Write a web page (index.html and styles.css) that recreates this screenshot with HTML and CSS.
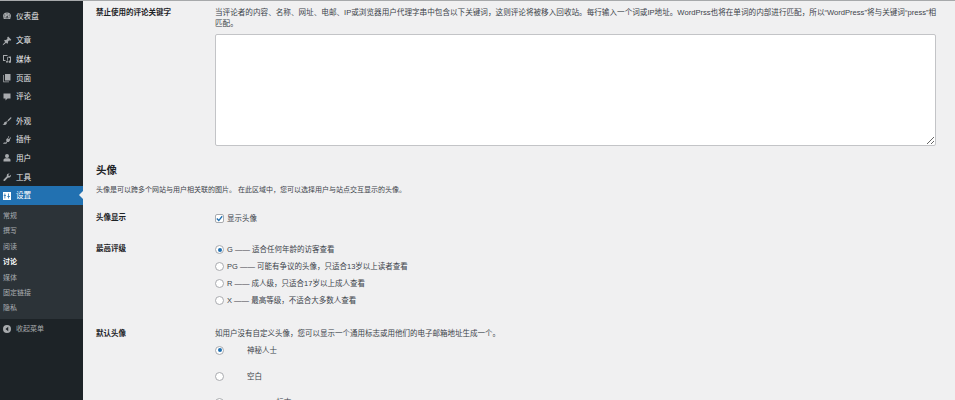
FILE: index.html
```html
<!DOCTYPE html>
<html lang="zh-CN">
<head>
<meta charset="utf-8">
<title>讨论设置</title>
<link rel="stylesheet" href="styles.css">
</head>
<body>
<div class="app">
  <nav class="side">
    <ul class="menu first">
      <li class="item"><svg class="ico" viewBox="0 0 20 20"><path d="M3.8 16C2.7 14.6 2 12.900 2 11a8 8 0 0 1 16 0c0 1.900-.7 3.600-1.800 5zM10 4.500a1 1 0 1 0 0 2 1 1 0 0 0 0-2zM5.500 7a1 1 0 1 0 0 2 1 1 0 0 0 0-2zm9 0a1 1 0 1 0 0 2 1 1 0 0 0 0-2zM4 11a1 1 0 1 0 0 2 1 1 0 0 0 0-2zm12 0a1 1 0 1 0 0 2 1 1 0 0 0 0-2zm-3.500-2.500L9.400 11a1.600 1.600 0 1 0 1.700 1.200zM7 14.500h6V13H7z"/></svg>仪表盘</li>
    </ul>
    <ul class="menu">
      <li class="item"><svg class="ico" viewBox="0 0 20 20"><path d="M10.440 3.020l1.820-1.820 6.360 6.350-1.830 1.820c-1.050-.68-2.480-.57-3.410.36l-.75.75c-.92.93-1.040 2.350-.35 3.410l-1.830 1.820-2.410-2.410-2.800 2.790c-.42.42-3.380 2.710-3.800 2.290s1.860-3.390 2.280-3.810l2.790-2.790L4.100 9.360l1.830-1.820c1.050.69 2.480.57 3.400-.36l.75-.75c.93-.92 1.050-2.350.36-3.410z"/></svg>文章</li>
      <li class="item"><svg class="ico" viewBox="0 0 20 20"><path d="M2 2h9v2H4v8h3v2H2zM13 5h5v10.500a2.500 2.500 0 1 1-2-2.400V8h-3zM8 15.500a2 2 0 1 1 4 0 2 2 0 0 1-4 0zM10 6h1.500v7H10z"/></svg>媒体</li>
      <li class="item"><svg class="ico" viewBox="0 0 20 20"><path d="M6 2h11v13H6zM4 4v13h10v1.500H2.500V4z"/></svg>页面</li>
      <li class="item"><svg class="ico" viewBox="0 0 20 20"><path d="M3 3h14v10h-6l-4 4v-4H3z"/></svg>评论</li>
    </ul>
    <ul class="menu sep">
      <li class="item"><svg class="ico" viewBox="0 0 20 20"><path d="M18 2l-7 6.500 2 2L19 4zM10 9.500L8.500 11 10 12.500l1.500-1zM7.500 11.500C5 11 4.500 13 4 15c-.3 1-1.500 1.500-3 1.500 3 2 6.500 1.500 8-.5 1-1.400 1-2.500.5-3.500z"/></svg>外观</li>
      <li class="item"><svg class="ico" viewBox="0 0 20 20"><path d="M13 2l1.500 1-2.500 4 2 1.300 2.500-3.800L18 5.500l-2.500 4 .8.500-1.500 2.300c-1 1.500-2.800 2-4.300 1.500L9 16.500H3.500V15H8l1.300-2.300c-1-1-1.300-2.700-.5-4l1.500-2.300.9.500zM2 18h7v-1H2z"/></svg>插件</li>
      <li class="item"><svg class="ico" viewBox="0 0 20 20"><path d="M10 2a3.800 3.800 0 1 1 0 8 3.800 3.800 0 0 1 0-8zM3 17v-3c0-2 2-3.500 4-3.500h6c2 0 4 1.500 4 3.500v3z"/></svg>用户</li>
      <li class="item"><svg class="ico" viewBox="0 0 20 20"><path d="M17.500 5.500c.6 1.600.2 3.400-1 4.600-1.200 1.100-2.900 1.500-4.400 1L6 17.500c-.8.800-2 .8-2.700.1-.8-.8-.8-2 0-2.800l6.400-6.300c-.5-1.500-.1-3.200 1-4.400 1.200-1.200 3-1.600 4.600-1l-3 2.900 2 2.400z"/></svg>工具</li>
      <li class="item current"><svg class="ico" viewBox="0 0 20 20"><path d="M2 2h16v16H2zm3 3v3H3.500v1.500H5V15h1.500V9.500H8V8H6.500V5zm7 0v5.500h-1.500V12H12v3h1.500v-3H16v-1.500h-2.500V5z" fill-rule="evenodd"/></svg>设置</li>
    </ul>
    <ul class="sub">
      <li>常规</li>
      <li>撰写</li>
      <li>阅读</li>
      <li class="on">讨论</li>
      <li>媒体</li>
      <li>固定链接</li>
      <li>隐私</li>
    </ul>
    <div class="collapse"><svg class="ico" viewBox="0 0 20 20"><path fill-rule="evenodd" d="M10 2a8 8 0 1 1 0 16 8 8 0 0 1 0-16zm2.500 3.500L7 10l5.500 4.500z"/></svg>收起菜单</div>
  </nav>

  <main class="main">
    <div class="row blacklist">
      <div class="th">禁止使用的评论关键字</div>
      <div class="td">
        <p class="desc lead">当评论者的内容、名称、网址、电邮、IP或浏览器用户代理字串中包含以下关键词，这则评论将被移入回收站。每行输入一个词或IP地址。WordPrss也将在单词的内部进行匹配，所以“WordPress”将与关键词“press”相匹配。</p>
        <textarea class="area"></textarea>
      </div>
    </div>

    <h2 class="title">头像</h2>
    <p class="intro">头像是可以跨多个网站与用户相关联的图片。 在此区域中，您可以选择用户与站点交互显示的头像。</p>

    <div class="row show">
      <div class="th">头像显示</div>
      <div class="td">
        <div class="opt"><span class="check"><svg viewBox="0 0 10 10"><path d="M2 5l2.200 2.300L8 2.500" fill="none" stroke="#2271b1" stroke-width="1.500"/></svg></span>显示头像</div>
      </div>
    </div>

    <div class="row rating">
      <div class="th">最高评级</div>
      <div class="td stack">
        <div class="opt"><span class="radio on"></span>G —— 适合任何年龄的访客查看</div>
        <div class="opt"><span class="radio"></span>PG —— 可能有争议的头像，只适合13岁以上读者查看</div>
        <div class="opt"><span class="radio"></span>R —— 成人级，只适合17岁以上成人查看</div>
        <div class="opt"><span class="radio"></span>X —— 最高等级，不适合大多数人查看</div>
      </div>
    </div>

    <div class="row avatar">
      <div class="th">默认头像</div>
      <div class="td">
        <p class="desc">如用户没有自定义头像，您可以显示一个通用标志或用他们的电子邮箱地址生成一个。</p>
        <div class="pick"><span class="radio on"></span>神秘人士</div>
        <div class="pick"><span class="radio"></span>空白</div>
        <div class="pick"><span class="radio"></span>Gravatar标志</div>
      </div>
    </div>
  </main>
</div>
</body>
</html>
```
FILE: styles.css
```css
* { box-sizing: border-box; }
html, body { margin: 0; height: 400px; overflow: hidden; }
body {
  background: #f0f0f1;
  color: #3c434a;
  font: 7.500px/13px "Liberation Sans", "Noto Sans CJK SC", sans-serif;
}
ul { list-style: none; margin: 0; padding: 0; }
p { margin: 0; }

.app { display: flex; height: 400px; border-top: 1px solid #a7a9ab; }

/* sidebar */
.side { width: 83px; flex: none; background: #1d2327; color: #e6e8ea; padding-top: 6px; font-size: 7.600px; }
.menu { margin-bottom: 6px; }
.menu.first { margin-bottom: 6px; }
.menu.sep { margin: 6px 0 0; }
.item { display: flex; align-items: center; height: 18.600px; padding-left: 2px; gap: 4px; position: relative; }
.ico { width: 10px; height: 10px; flex: none; fill: #a7aaad; }
.item.current { background: #2271b1; color: #fff; margin-top: 0; }
.item.current .ico { fill: #fff; }
.item.current::after {
  content: "";
  position: absolute;
  right: 0;
  top: 5px;
  border: 4.500px solid transparent;
  border-right-color: #f0f0f1;
  border-left-width: 0;
}
.sub { background: #2c3338; padding: 3px 0; color: #a9adb1; }
.sub li { height: 15.400px; line-height: 15.400px; padding-left: 3px; font-size: 7px; }
.sub li.on { color: #fff; font-weight: 700; }
.collapse { display: flex; align-items: center; gap: 4px; height: 18px; margin-top: 1px; padding-left: 2px; color: #a7aaad; font-size: 7px; }

/* main */
.main { flex: 1; padding: 5px 14px 0 13px; min-width: 0; }
.row { display: flex; }
.th { width: 119px; flex: none; font-weight: 700; color: #1d2327; }
.td { flex: 1; min-width: 0; }
.desc { line-height: 11px; }
.desc.lead { margin-top: 1px; font-size: 7.600px; }
.area {
  display: block;
  width: 721px;
  height: 112px;
  margin-top: 5px;
  background: #fff;
  border: 1px solid #c3c4c7;
  border-radius: 2px;
}
.title { margin: 17px 0 0; font-size: 10.500px; line-height: 14px; font-weight: 700; color: #1d2327; }
.intro { margin-top: 7px; font-size: 7px; line-height: 11px; }
.show { margin-top: 15px; }
.show .th, .rating .th { line-height: 15px; }
.rating { margin-top: 14px; }
.avatar { margin-top: 19px; }
.avatar .th { line-height: 11px; }
.opt { display: flex; align-items: center; gap: 3px; height: 17px; }
.check, .radio {
  display: inline-flex;
  align-items: center;
  justify-content: center;
  width: 9px;
  height: 9px;
  flex: none;
  background: #fff;
  border: 1px solid #a9abaf;
}
.check { border-radius: 2px; }
.check svg { width: 9px; height: 9px; flex: none; }
.radio { border-radius: 50%; }
.radio.on::before { content: ""; width: 4px; height: 4px; border-radius: 50%; background: #2271b1; }
.pick { display: flex; align-items: center; gap: 23px; height: 26px; }
.desc + .pick { height: 22px; margin-bottom: 2px; }
```
